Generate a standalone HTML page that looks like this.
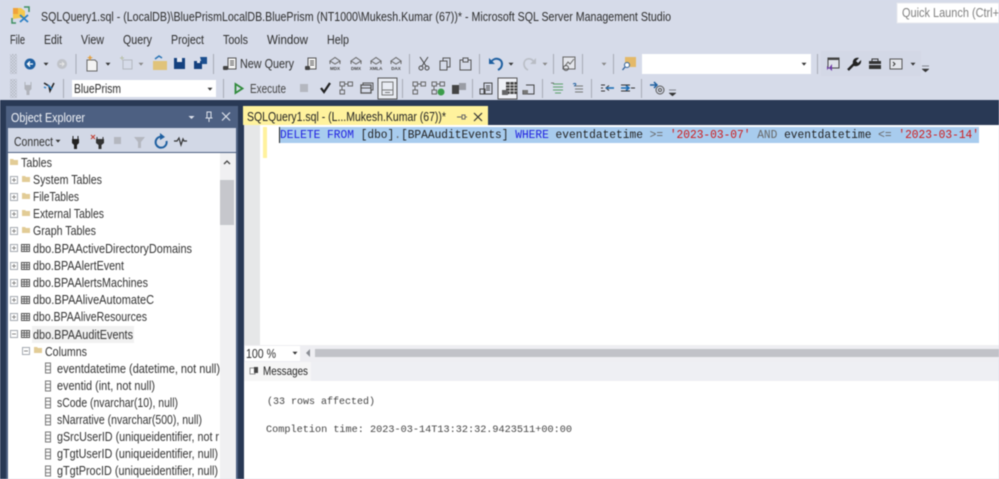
<!DOCTYPE html>
<html><head><meta charset="utf-8"><style>
html,body{margin:0;padding:0;width:999px;height:479px;overflow:hidden;background:#d6dbe9}
svg{display:block;filter:blur(.5px)}
text{font-family:"Liberation Sans",sans-serif;font-size:12.5px;fill:#2e2e2e;white-space:pre}
.m{font-family:"Liberation Mono",monospace}
.t{font-size:12.5px;fill:#333}
.c{font-size:4.500px;font-weight:bold;fill:#444;text-anchor:middle}
</style></head><body>
<svg width="999" height="479" viewBox="0 0 999 479" xmlns="http://www.w3.org/2000/svg">
<defs>
<pattern id="g" width="3" height="3" patternUnits="userSpaceOnUse"><rect width="1.5" height="1.5" fill="#b4b8c3"/><rect x="1.5" y="1.5" width="1.5" height="1.5" fill="#b4b8c3"/></pattern>
<g id="dd"><path d="M-2.5-1.2h5L0 1.6z" fill="#333"/></g>
<g id="ddg"><path d="M-2.5-1.2h5L0 1.6z" fill="#888"/></g>
<g id="pl"><rect x="-3.500" y="-3.500" width="7" height="7" fill="#fff" stroke="#a5a9b0"/><path d="M-2 0h4M0-2v4" stroke="#888"/></g>
<g id="mi"><rect x="-3.500" y="-3.500" width="7" height="7" fill="#fff" stroke="#a5a9b0"/><path d="M-2 0h4" stroke="#888"/></g>
<g id="fo"><path d="M-4-3h3l1 1h4v5h-8z" fill="#e2cc96"/></g>
<g id="tb"><rect x="-3.500" y="-3.500" width="8" height="7" fill="#fff" stroke="#555"/><path d="M-3.500-1h8M-3.500 1.200h8M-.8-3.500v7M1.800-3.500v7" stroke="#555" stroke-width=".9"/></g>
<g id="co"><rect x="-2.5" y="-5" width="5" height="10" fill="#fff" stroke="#777"/><path d="M-2.5-1.7h5M-2.5 1.7h5" stroke="#777"/></g>
<g id="cube"><path d="M-5-2 0-5.500l5 3.500-5 3z" fill="none" stroke="#666"/><path d="M-5-2v3M5-2v3" stroke="#666"/></g>
<g id="fl"><rect x="-6" y="-6" width="4.5" height="4" fill="none" stroke="#666"/><rect x="2" y="-6" width="4.5" height="4" fill="none" stroke="#666"/><rect x="-6" y="2" width="4.5" height="4" fill="none" stroke="#666"/><path d="M-1.5-4H2M-4-2v4" stroke="#666"/></g>
</defs>

<rect width="999" height="479" fill="#d6dbe9"/>

<!-- app icon -->
<path d="M13 8h8l4 3v7h-6l-6 1z" fill="#f5c84c"/><path d="M13 8h5v6h-5z" fill="#f0a23a"/>
<path d="M12 18v5h4M24 7h5v5" fill="none" stroke="#3f8f62" stroke-width="1.5"/>
<path d="M20 15l8 7M28 15l-8 7" stroke="#2a7fc4" stroke-width="1.8"/>

<text x="41" y="21" textLength="630" lengthAdjust="spacingAndGlyphs">SQLQuery1.sql - (LocalDB)\BluePrismLocalDB.BluePrism (NT1000\Mukesh.Kumar (67))* - Microsoft SQL Server Management Studio</text>
<rect x="897" y="3" width="102" height="20" fill="#fff" stroke="#e6e8ee"/>
<text x="902" y="17" textLength="97" lengthAdjust="spacingAndGlyphs" style="fill:#808080">Quick Launch (Ctrl+</text>

<!-- menu -->
<text x="10" y="44" textLength="15" lengthAdjust="spacingAndGlyphs">File</text>
<text x="44" y="44" textLength="18" lengthAdjust="spacingAndGlyphs">Edit</text>
<text x="81" y="44" textLength="23" lengthAdjust="spacingAndGlyphs">View</text>
<text x="123" y="44" textLength="29" lengthAdjust="spacingAndGlyphs">Query</text>
<text x="171" y="44" textLength="33" lengthAdjust="spacingAndGlyphs">Project</text>
<text x="223" y="44" textLength="25" lengthAdjust="spacingAndGlyphs">Tools</text>
<text x="267" y="44" textLength="41" lengthAdjust="spacingAndGlyphs">Window</text>
<text x="327" y="44" textLength="22" lengthAdjust="spacingAndGlyphs">Help</text>

<!-- toolbar 1 -->
<rect x="10" y="54" width="7" height="20" fill="url(#g)"/>
<circle cx="30" cy="64" r="5.5" fill="#1e5fa0"/><path d="M33 64h-5M30 61.5 27.5 64l2.5 2.5" stroke="#fff" stroke-width="1.3" fill="none"/>
<use href="#dd" x="46" y="64"/>
<circle cx="62" cy="64" r="5" fill="#c0c3c9"/><path d="M59.5 64h4M62 62l2 2-2 2" stroke="#e8e8e8" fill="none"/>
<rect x="75.500" y="54" width="1" height="20" fill="#a7abb6"/>
<path d="M87 60h8l2 2v9h-10z" fill="#f3f3f3" stroke="#666"/><path d="M90 55l1 2 2 .5-2 1-1 2-1-2-2-1 2-.5z" fill="#e2a040"/>
<use href="#dd" x="108" y="64"/>
<rect x="123" y="60" width="9" height="9" fill="none" stroke="#b4b8bf"/><path d="M122 56v4M120 58h4" stroke="#b8c0a8"/>
<use href="#ddg" x="141" y="64"/>
<path d="M153 61h14v9h-14z" fill="#e0c37a"/><path d="M155 59l4-3 3 2" fill="none" stroke="#2a74b5" stroke-width="1.5"/>
<path d="M174 58h11v11h-11z" fill="#14417f"/><rect x="177" y="58" width="5" height="4" fill="#e6e9f1"/>
<path d="M194 61h8v8h-8z" fill="#14417f"/><path d="M200 57h7v7h-5z" fill="#1c4f8f"/><rect x="197" y="61" width="3" height="2" fill="#e6e9f1"/>
<rect x="213" y="54" width="1" height="20" fill="#a7abb6"/>
<path d="M228 58h8v11h-8z" fill="#f4f4f4" stroke="#555"/><path d="M230 61h4M230 63h4M230 65h4" stroke="#555"/><rect x="223" y="66" width="5" height="4" rx="1" fill="#444"/>
<text x="240" y="68" textLength="54" lengthAdjust="spacingAndGlyphs" style="fill:#333">New Query</text>
<path d="M308 58h8v11h-8z" fill="#f4f4f4" stroke="#555"/><path d="M310 61h4M310 63h4M310 65h4" stroke="#555"/><rect x="305" y="66" width="5" height="4" rx="1" fill="#444"/>
<use href="#cube" x="335" y="63"/><text class="c" x="335" y="70">MDX</text>
<use href="#cube" x="356" y="63"/><text class="c" x="356" y="70">DMX</text>
<use href="#cube" x="376" y="63"/><text class="c" x="376" y="70">XMLA</text>
<use href="#cube" x="396" y="63"/><text class="c" x="396" y="70">DAX</text>
<rect x="409" y="54" width="1" height="20" fill="#a7abb6"/>
<path d="M420 57l6 9M428 57l-6 9" stroke="#444" fill="none"/><circle cx="421" cy="68" r="2" fill="none" stroke="#444"/><circle cx="427" cy="68" r="2" fill="none" stroke="#444"/>
<rect x="440" y="61" width="7" height="9" fill="none" stroke="#555"/><path d="M443 61v-3h7v9h-3" fill="none" stroke="#555"/>
<rect x="460" y="60" width="11" height="10" fill="none" stroke="#555"/><rect x="463" y="58" width="5" height="4" fill="#d6dbe9" stroke="#555"/>
<rect x="479" y="54" width="1" height="20" fill="#a7abb6"/>
<path d="M491 62c3-5 11-4 11 2 0 3-2 5-4 6" fill="none" stroke="#1e5fa0" stroke-width="2"/><path d="M489 58v6h6z" fill="#1e5fa0"/>
<use href="#dd" x="511" y="64"/>
<path d="M534 62c-3-5-10-4-10 2 0 3 2 5 4 6" fill="none" stroke="#b9bdc5" stroke-width="1.6"/><path d="M536 58v6h-6z" fill="#b9bdc5"/>
<use href="#ddg" x="545" y="64"/>
<rect x="553" y="54" width="1" height="20" fill="#a7abb6"/>
<rect x="563" y="57" width="12" height="12" fill="#e4e6ec" stroke="#666"/><path d="M565 66l3-4 2 2 4-5" fill="none" stroke="#666"/><circle cx="566" cy="68" r="2.500" fill="none" stroke="#555"/>
<rect x="582" y="54" width="1" height="20" fill="#a7abb6"/>
<use href="#ddg" x="604" y="64"/>
<rect x="613" y="54" width="1" height="20" fill="#a7abb6"/>
<path d="M625 57h11v10h-11z" fill="#e4b968"/><circle cx="627" cy="65" r="2.500" fill="#fff" stroke="#2c5f98"/><path d="M625 67l-2.500 3" stroke="#2c5f98" stroke-width="1.300"/>
<rect x="642" y="54" width="169" height="20" fill="#fff"/><use href="#dd" x="804" y="64"/>
<rect x="817" y="54" width="1" height="20" fill="#a7abb6"/>
<rect x="821" y="51" width="100" height="25" fill="#d3d8e6"/>
<rect x="828" y="58" width="11" height="10" fill="#dfe2ea" stroke="#444"/><rect x="828" y="58" width="11" height="2" fill="#444"/><path d="M827 66l2 2 3-4v7l-3-3-2 2z" fill="#6f3aa8"/>
<path d="M848 70l6-6" stroke="#222" stroke-width="2.500"/><path d="M853 64c-1-4 2-7 6-6l-3 3 2 2 3-3c1 4-3 7-7 6z" fill="#222"/>
<rect x="869" y="61" width="12" height="8" fill="#333"/><path d="M872 61v-2h6v2" fill="none" stroke="#333"/><path d="M869 64.500h12" stroke="#d6dbe9"/>
<rect x="890" y="59" width="12" height="10" fill="#e4e6ec" stroke="#555"/><path d="M893 62l2 2-2 2" fill="none" stroke="#333"/>
<use href="#dd" x="913" y="64"/>
<path d="M922 66h7M922 69h7l-3.500 3z" fill="#333" stroke="#333" stroke-width=".5"/>

<!-- toolbar 2 -->
<rect x="10" y="79" width="7" height="19" fill="url(#g)"/>
<path d="M25 82v3M31 82v3" stroke="#b0b3ba"/><path d="M24.500 85h7v4l-2 2v4h-3v-4l-2-2z" fill="#b0b3ba"/>
<path d="M44 83l5 3 1 5 4-8" fill="none" stroke="#222" stroke-width="1.500"/><path d="M48 85l4 4M44 87l2 1" stroke="#2a7fc4" stroke-width="1.500"/>
<rect x="63" y="79" width="1" height="19" fill="#a7abb6"/>
<rect x="72" y="80" width="144" height="17" fill="#fff"/>
<text x="74" y="93" textLength="47" lengthAdjust="spacingAndGlyphs">BluePrism</text>
<use href="#dd" x="210" y="89"/>
<rect x="223" y="79" width="1" height="19" fill="#a7abb6"/>
<path d="M235.500 84l7 4.500-7 4.500z" fill="#d6dbe9" stroke="#2f8a3a" stroke-width="1.800"/>
<text x="250" y="93" textLength="36" lengthAdjust="spacingAndGlyphs" style="fill:#444">Execute</text>
<rect x="300" y="84" width="8" height="8" fill="#b4b7bf"/>
<path d="M321 88l3 4 6-9" fill="none" stroke="#222" stroke-width="2.200"/>
<use href="#fl" x="346" y="88"/>
<rect x="361" y="85" width="10" height="8" fill="none" stroke="#555" stroke-width="1.300"/><path d="M363 85v-2h10v7h-2" fill="none" stroke="#555"/><path d="M361 88h10" stroke="#555"/>
<rect x="378" y="78" width="19" height="21" fill="#e9ecf3" stroke="#555"/>
<rect x="382" y="82" width="11" height="13" fill="none" stroke="#777"/><path d="M382 90h11M385 92.500h5" stroke="#777"/>
<rect x="402" y="79" width="1" height="19" fill="#a7abb6"/>
<use href="#fl" x="419" y="88"/><use href="#fl" x="438" y="88"/>
<circle cx="441" cy="92" r="3.500" fill="#3c9c4a"/>
<rect x="452" y="85" width="7" height="9" fill="#444"/><path d="M459 83h7v7h-7z" fill="#9a9da5"/>
<rect x="472" y="79" width="1" height="19" fill="#a7abb6"/>
<rect x="484" y="83" width="8" height="11" fill="none" stroke="#444"/><path d="M486 86h4M486 88h4M486 90h4" stroke="#444"/><rect x="480" y="89" width="5" height="5" fill="none" stroke="#444"/>
<rect x="498" y="78" width="19" height="21" fill="#eff1f6" stroke="#555"/>
<rect x="506" y="82" width="11" height="12" fill="#444"/><path d="M506 85h11M506 88h11M506 91h11M510 82v12M514 82v12" stroke="#eee" stroke-width=".7"/><rect x="502" y="90" width="6" height="5" fill="#666"/>
<path d="M526 85h8v9h-11v-4" fill="none" stroke="#444"/><rect x="523" y="90" width="5" height="4" fill="#777"/>
<rect x="542" y="79" width="1" height="19" fill="#a7abb6"/>
<path d="M553 84h10M553 87h10M553 90h10M555 93h6" stroke="#5aa06a"/><path d="M551 83h3" stroke="#777"/>
<path d="M575 86h8M575 89h8M575 92h8" stroke="#777"/><path d="M573 84c3-2 4 1 1 2" stroke="#1e5fa0" fill="none"/>
<rect x="591" y="79" width="1" height="19" fill="#a7abb6"/>
<path d="M601 85h4M601 88h2M601 91h4M609 85.500 606 88l3 2.500" stroke="#333" fill="none"/><path d="M606 88h8" stroke="#1e6fb5" stroke-width="1.600"/>
<path d="M621 88h8M626 85.500l3 2.500-3 2.500" stroke="#1e6fb5" stroke-width="1.600" fill="none"/><path d="M621 85h9M631 88h4M621 91h9" stroke="#333"/>
<rect x="641" y="79" width="1" height="19" fill="#a7abb6"/>
<path d="M650 85h7M654 82l3 3-3 3" stroke="#1e5fa0" stroke-width="1.500" fill="none"/><circle cx="660" cy="90" r="4" fill="none" stroke="#555"/><circle cx="660" cy="90" r="1.500" fill="none" stroke="#555"/>
<path d="M669 90h7M669 93h7l-3.500 3z" fill="#333" stroke="#333" stroke-width=".5"/>

<!-- dark bg -->
<rect x="0" y="100" width="999" height="379" fill="#293955"/>

<!-- Object explorer -->
<rect x="6" y="106" width="232" height="373" fill="#4d6082"/>
<text x="11" y="122" textLength="74" lengthAdjust="spacingAndGlyphs" style="fill:#f2f4f8">Object Explorer</text>
<path d="M188.500 116h6l-3 3z" fill="#dfe3ec"/>
<path d="M207 112h4v6h-4zM205.500 118h7M209 118v4" stroke="#dfe3ec" fill="none"/>
<path d="M222 112.500l8 8M230 112.500l-8 8" stroke="#dfe3ec" stroke-width="1.200"/>
<rect x="8" y="128" width="228" height="24" fill="#d2d8e6"/>
<text x="14" y="146" textLength="39" lengthAdjust="spacingAndGlyphs" style="fill:#333">Connect</text>
<use href="#dd" x="58" y="141"/>
<path d="M73 136v3M78 136v3" stroke="#222"/><path d="M72 139h7v4l-2 2v4h-3v-4l-2-2z" fill="#222"/>
<path d="M91 135l4 4M95 135l-4 4" stroke="#c0392b"/>
<path d="M97 137v2M103 137v2" stroke="#333"/><path d="M96 139h8v4l-2.500 2v4h-3v-4l-2.500-2z" fill="#333"/>
<rect x="114" y="137" width="7" height="7" fill="#b4b7bf"/>
<path d="M134 137h11l-4 5v6h-3v-6z" fill="#b4b7bf"/>
<path d="M163 137a5.500 5.500 0 1 0 3.500 4" fill="none" stroke="#1e5fa0" stroke-width="2"/><path d="M160 133v7l5-3z" fill="#1e5fa0"/>
<path d="M174 141h3l2-3 2 7 2-6 1 2h3" fill="none" stroke="#333" stroke-width="1.200"/>
<rect x="8" y="153" width="228" height="326" fill="#fff"/>
<rect x="220" y="153" width="16" height="326" fill="#f0f0f2"/>
<rect x="220" y="180" width="14" height="45" fill="#c6c7cc"/>
<path d="M224 164l3-3 3 3" fill="none" stroke="#444" stroke-width="1.300"/>

<use href="#fo" x="14" y="162"/><text class="t" x="21" y="167" textLength="31" lengthAdjust="spacingAndGlyphs">Tables</text>

<use href="#pl" x="14" y="180"/><use href="#fo" x="26" y="179"/><text class="t" x="33" y="184" textLength="69" lengthAdjust="spacingAndGlyphs">System Tables</text>
<use href="#pl" x="14" y="197"/><use href="#fo" x="26" y="196"/><text class="t" x="33" y="201" textLength="46" lengthAdjust="spacingAndGlyphs">FileTables</text>
<use href="#pl" x="14" y="214"/><use href="#fo" x="26" y="213"/><text class="t" x="33" y="218" textLength="71" lengthAdjust="spacingAndGlyphs">External Tables</text>
<use href="#pl" x="14" y="231"/><use href="#fo" x="26" y="230"/><text class="t" x="33" y="235" textLength="63" lengthAdjust="spacingAndGlyphs">Graph Tables</text>
<use href="#pl" x="14" y="248"/><use href="#tb" x="25" y="248"/><text class="t" x="33" y="253" textLength="159" lengthAdjust="spacingAndGlyphs">dbo.BPAActiveDirectoryDomains</text>
<use href="#pl" x="14" y="266"/><use href="#tb" x="25" y="266"/><text class="t" x="33" y="270" textLength="91" lengthAdjust="spacingAndGlyphs">dbo.BPAAlertEvent</text>
<use href="#pl" x="14" y="283"/><use href="#tb" x="25" y="283"/><text class="t" x="33" y="287" textLength="115" lengthAdjust="spacingAndGlyphs">dbo.BPAAlertsMachines</text>
<use href="#pl" x="14" y="300"/><use href="#tb" x="25" y="300"/><text class="t" x="33" y="304" textLength="121" lengthAdjust="spacingAndGlyphs">dbo.BPAAliveAutomateC</text>
<use href="#pl" x="14" y="317"/><use href="#tb" x="25" y="317"/><text class="t" x="33" y="321" textLength="114" lengthAdjust="spacingAndGlyphs">dbo.BPAAliveResources</text>
<rect x="32" y="326" width="102" height="17" fill="#f1f1f1"/>
<use href="#mi" x="14" y="334"/><use href="#tb" x="25" y="334"/><text class="t" x="33" y="339" textLength="100" lengthAdjust="spacingAndGlyphs">dbo.BPAAuditEvents</text>
<use href="#mi" x="26" y="351"/><use href="#fo" x="38" y="350"/><text class="t" x="45" y="356" textLength="42" lengthAdjust="spacingAndGlyphs">Columns</text>
<use href="#co" x="48" y="368"/><text class="t" x="57" y="373" textLength="163" lengthAdjust="spacingAndGlyphs">eventdatetime (datetime, not null)</text>
<use href="#co" x="48" y="386"/><text class="t" x="57" y="390" textLength="98" lengthAdjust="spacingAndGlyphs">eventid (int, not null)</text>
<use href="#co" x="48" y="403"/><text class="t" x="57" y="407" textLength="121" lengthAdjust="spacingAndGlyphs">sCode (nvarchar(10), null)</text>
<use href="#co" x="48" y="420"/><text class="t" x="57" y="424" textLength="145" lengthAdjust="spacingAndGlyphs">sNarrative (nvarchar(500), null)</text>
<use href="#co" x="48" y="437"/><text class="t" x="57" y="441" textLength="162" lengthAdjust="spacingAndGlyphs">gSrcUserID (uniqueidentifier, not r</text>
<use href="#co" x="48" y="454"/><text class="t" x="57" y="458" textLength="161" lengthAdjust="spacingAndGlyphs">gTgtUserID (uniqueidentifier, null)</text>
<use href="#co" x="48" y="471"/><text class="t" x="57" y="475" textLength="161" lengthAdjust="spacingAndGlyphs">gTgtProcID (uniqueidentifier, null)</text>

<!-- tab -->
<rect x="243" y="106" width="245" height="19" fill="#fff29d"/>
<text x="247" y="121" textLength="199" lengthAdjust="spacingAndGlyphs" style="fill:#222">SQLQuery1.sql - (L...Mukesh.Kumar (67))*</text>
<path d="M457 117h5M462 115v4h3v-4zM465 117h2" stroke="#666" fill="none"/>
<path d="M474 113l8 8M482 113l-8 8" stroke="#333" stroke-width="1.200"/>

<!-- editor -->
<rect x="244" y="125" width="755" height="220" fill="#fff"/>
<rect x="244" y="125" width="16" height="220" fill="#e6e7e8"/>
<rect x="263" y="127" width="4" height="31" fill="#fff29d"/>
<rect x="279" y="127" width="700" height="16" fill="#a8ccee"/>
<rect x="279" y="127" width="1" height="16" fill="#222"/>
<text class="m" x="280" y="138" style="font-size:12px;fill:#222" textLength="699" lengthAdjust="spacingAndGlyphs"><tspan fill="#2020e0">DELETE FROM</tspan> [dbo]<tspan fill="#666">.</tspan>[BPAAuditEvents] <tspan fill="#2020e0">WHERE</tspan> eventdatetime <tspan fill="#666">&gt;=</tspan> <tspan fill="#d01818">'2023-03-07'</tspan> <tspan fill="#666">AND</tspan> eventdatetime <tspan fill="#666">&lt;=</tspan> <tspan fill="#d01818">'2023-03-14'</tspan></text>

<!-- zoom bar -->
<rect x="244" y="345" width="755" height="17" fill="#eeeef2"/>
<rect x="245" y="346" width="55" height="15" fill="#fff"/>
<text x="246" y="358" textLength="30" lengthAdjust="spacingAndGlyphs">100 %</text>
<use href="#dd" x="295" y="353"/>
<path d="M310 349v8l-4-4z" fill="#8a8d94"/>
<rect x="315" y="349" width="684" height="8" fill="#c1c2c8"/>

<!-- messages -->
<rect x="244" y="362" width="755" height="117" fill="#fff"/>
<rect x="311" y="362" width="688" height="19" fill="#eeeff3"/>
<rect x="244" y="362" width="67" height="19" fill="#f6f6f6"/>
<rect x="250" y="368" width="5" height="6" fill="#fff" stroke="#777" stroke-width=".8"/><rect x="254" y="367" width="4" height="6" fill="#444"/>
<text x="263" y="375" textLength="45" lengthAdjust="spacingAndGlyphs" style="font-size:12px;fill:#222">Messages</text>
<text class="m" x="267" y="404" textLength="108" lengthAdjust="spacingAndGlyphs" style="font-size:10.500px;fill:#444">(33 rows affected)</text>
<text class="m" x="266" y="432" textLength="306" lengthAdjust="spacingAndGlyphs" style="font-size:10.500px;fill:#444">Completion time: 2023-03-14T13:32:32.9423511+00:00</text>
</svg>
</body></html>
